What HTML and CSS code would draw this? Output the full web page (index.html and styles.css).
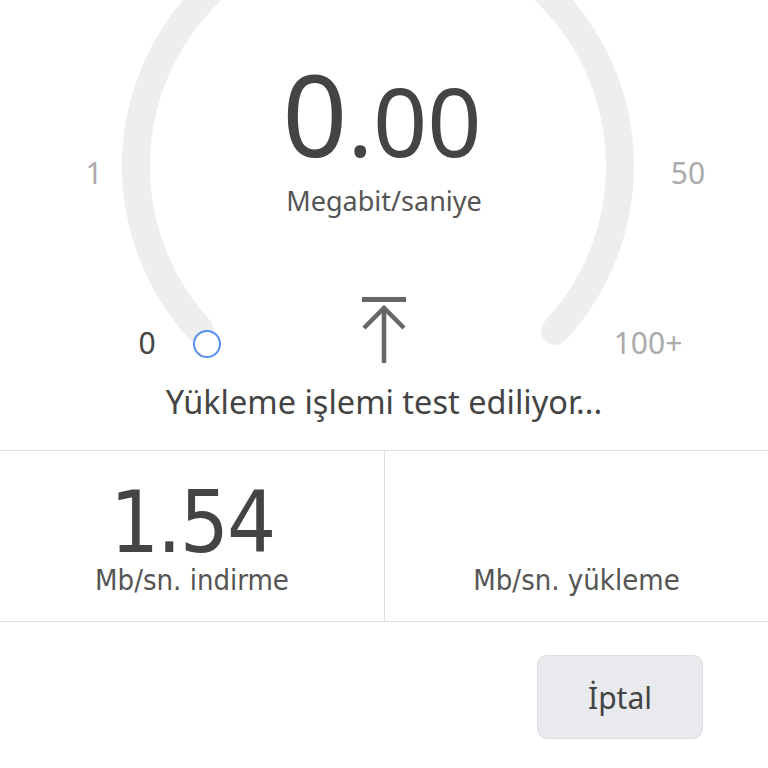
FILE: index.html
```html
<!DOCTYPE html>
<html lang="tr">
<head>
    <meta charset="UTF-8">
    <meta name="viewport" content="width=device-width, initial-scale=1.0">
    <title>Hız Testi</title>
    <link rel="stylesheet" href="styles.css">
</head>
<body>

    <!-- gösterge -->
    <section class="gauge">
        <svg class="gauge-arc" width="768" height="451" viewBox="0 0 768 451">
            <path d="M 199 329 A 242 242 0 1 1 555 331" fill="none" stroke="#eeeeee" stroke-width="28" stroke-linecap="round"/>
            <circle cx="207" cy="344" r="13" fill="#fff" stroke="#5d8ff0" stroke-width="2"/>
        </svg>

        <span class="scale scale-1">1</span>
        <span class="scale scale-50">50</span>
        <span class="scale scale-0">0</span>
        <span class="scale scale-100">100+</span>

        <div class="gauge-center">
            <div class="speed"><span class="speed-int">0</span><span class="speed-dec">.00</span></div>
            <div class="unit">Megabit/saniye</div>
            <svg class="upload-icon" width="48" height="68" viewBox="0 0 48 68">
                <line x1="2" y1="2.5" x2="46" y2="2.5" stroke="#666" stroke-width="5"/>
                <polyline points="4,31 24,11 44,31" fill="none" stroke="#666" stroke-width="4.5"/>
                <line x1="24" y1="12" x2="24" y2="66" stroke="#666" stroke-width="4.5"/>
            </svg>
            <div class="status">Yükleme işlemi test ediliyor...</div>
        </div>
    </section>

    <!-- sonuçlar -->
    <section class="results">
        <div class="result">
            <div class="result-value">1.54</div>
            <div class="result-label">Mb/sn. indirme</div>
        </div>
        <div class="result">
            <div class="result-value"></div>
            <div class="result-label">Mb/sn. yükleme</div>
        </div>
    </section>

    <div class="actions">
        <button class="cancel-btn">İptal</button>
    </div>

</body>
</html>
```

FILE: styles.css
```css
/* temel */
body {
    margin: 0;
    background: #fff;
    color: #444;
    font-family: "Noto Sans", "Open Sans", sans-serif;
    width: 768px;
    height: 768px;
    overflow: hidden;
}

/* --- gösterge --- */
.gauge {
    position: relative;
    height: 450px;
    border-bottom: 1px solid #dcdcdc;
}
.gauge-arc {
    position: absolute;
    left: 0;
    top: 0;
}

.scale {
    position: absolute;
    font-size: 30px;
    line-height: 1;
    color: #ababab;
    transform: translate(-50%, -50%);
}
.scale-1 { left: 94px; top: 173px; }
.scale-50 { left: 688px; top: 173px; }
.scale-0 { left: 147px; top: 343px; color: #444; }
.scale-100 { left: 648px; top: 343px; }

.gauge-center {
    position: relative;
    display: flex;
    flex-direction: column;
    align-items: center;
    padding-top: 56px;
}
.speed {
    line-height: 1;
    color: #444;
    display: flex;
    align-items: baseline;
    margin-left: -4px;
}
.speed-int { font-size: 114px; }
.speed-dec { font-size: 95px; }

.unit {
    margin-top: 12px;
    font-size: 27px;
    color: #555;
}

.upload-icon {
    margin-top: 78px;
}

.status {
    margin-top: 14px;
    font-size: 32.5px;
    color: #444;
}

/* --- sonuçlar --- */
.results {
    display: grid;
    grid-template-columns: 1fr 1fr;
    height: 170px;
    border-bottom: 1px solid #dcdcdc;
}
.result {
    display: flex;
    flex-direction: column;
    align-items: center;
    justify-content: flex-end;
    padding-bottom: 24px;
    font-family: "DejaVu Sans Condensed", "Liberation Sans Narrow", sans-serif;
    font-stretch: condensed;
}
.result + .result { border-left: 1px solid #dcdcdc; }
.result-value {
    font-size: 86px;
    line-height: 1;
    color: #444;
    letter-spacing: -2px;
}
.result-label {
    font-size: 29px;
    line-height: 1.1;
    color: #555;
}

/* --- iptal --- */
.actions {
    display: flex;
    justify-content: flex-end;
    padding: 33px 65px 0 0;
}
.cancel-btn {
    width: 166px;
    height: 84px;
    background: #e9eaed;
    border: 1px solid #dddee1;
    border-radius: 10px;
    font-family: "Noto Sans", sans-serif;
    font-size: 30px;
    color: #444;
}
```
